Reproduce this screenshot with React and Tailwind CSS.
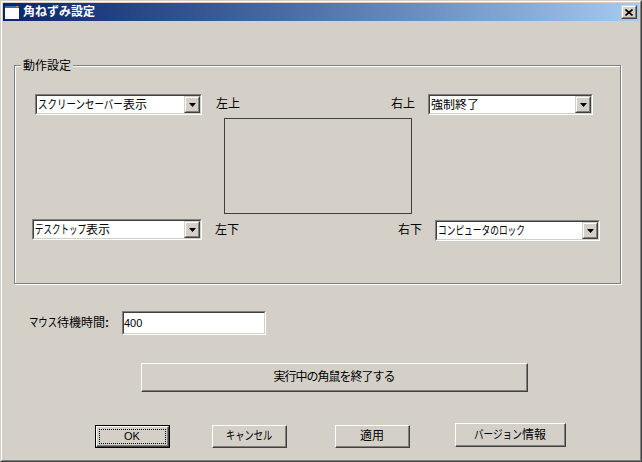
import React from 'react';

const FONT = "font-['Liberation_Sans','Noto_Sans_CJK_JP',sans-serif]";

// the original bitmap font has narrow kana, so squeeze them to the measured width
const Kana = ({ width, scale, children }) => (
  <span className={`inline-block whitespace-nowrap align-top ${width}`}>
    <span className={`inline-block origin-left ${scale}`}>{children}</span>
  </span>
);

// raised win2k style button edge
const Raised = ({ className = '', children }) => (
  <div className={`border border-t-white border-l-white border-r-[#404040] border-b-[#404040] bg-[#d4d0c8] ${className}`}>
    <div className="w-full h-full border-r border-b border-[#808080] flex items-center justify-center">
      {children}
    </div>
  </div>
);

// small button used in combos and the caption bar
const Small = ({ className = '', children }) => (
  <div className={`border border-t-[#d4d0c8] border-l-[#d4d0c8] border-r-[#404040] border-b-[#404040] bg-[#d4d0c8] ${className}`}>
    <div className="w-full h-full border border-t-white border-l-white border-r-[#808080] border-b-[#808080] flex items-center justify-center">
      {children}
    </div>
  </div>
);

const Sunken = ({ className = '', children }) => (
  <div className={`border border-t-[#808080] border-l-[#808080] border-r-white border-b-white ${className}`}>
    <div className="w-full h-full border border-t-[#404040] border-l-[#404040] border-r-[#d4d0c8] border-b-[#d4d0c8] bg-white flex items-center">
      {children}
    </div>
  </div>
);

const Combo = ({ children, className = '' }) => (
  <Sunken className={`h-[21px] shrink-0 ${className}`}>
    <span className="flex-1 pl-[1px] text-[12px] leading-none whitespace-nowrap overflow-hidden">{children}</span>
    <Small className="w-4 h-[17px] shrink-0">
      <svg width="7" height="4" viewBox="0 0 7 4"><path d="M0 0h7L3.5 4z" fill="#000" /></svg>
    </Small>
  </Sunken>
);

const App = () => {
  return (
    <div className={`w-[642px] h-[462px] bg-[#d4d0c8] text-black text-[12px] overflow-hidden ${FONT}`}>
      <div className="w-full h-full border border-t-[#d4d0c8] border-l-[#d4d0c8] border-r-[#404040] border-b-[#404040]">
        <div className="w-full h-full border border-t-white border-l-white border-r-[#808080] border-b-[#808080] p-[1px] flex flex-col">
          {/* Title bar */}
          <div className="h-[18px] shrink-0 flex items-center bg-gradient-to-r from-[#0a246a] to-[#a6caf0] px-[2px]">
            <svg width="14" height="13" viewBox="0 0 14 13" className="shrink-0">
              <rect x="0" y="0" width="14" height="13" fill="#fff" />
              <rect x="0" y="0" width="14" height="2" fill="#3a6ea5" />
              <rect x="11" y="0" width="2" height="1" fill="#d98a3a" />
            </svg>
            <span className="ml-1 font-bold text-white text-[12px] leading-none">角ねずみ設定</span>
            <Small className="ml-auto w-4 h-[14px]">
              <svg width="8" height="7" viewBox="0 0 8 7"><path d="M0.5 0.5L7.5 6.5M7.5 0.5L0.5 6.5" stroke="#000" strokeWidth="1.6" /></svg>
            </Small>
          </div>

          {/* 動作設定 group */}
          <div className="relative mt-[44px] ml-[11px] w-[607px] h-[219px] shrink-0 border border-[#808080] shadow-[inset_1px_1px_0_#fff,1px_1px_0_#fff] pt-[28px] flex flex-col">
            <span className="absolute left-[6px] -top-[7px] bg-[#d4d0c8] px-[2px] text-[12px] leading-[15px]">動作設定</span>

            <div className="flex items-center h-[21px] shrink-0">
              <Combo className="ml-[20px] w-[167px]">
                <Kana width="w-[85px]" scale="scale-x-[0.79]">スクリーンセーバー</Kana>表示
              </Combo>
              <span className="ml-[14px] pb-[1px]">左上</span>
              <span className="ml-auto pb-[1px]">右上</span>
              <Combo className="ml-[13px] mr-[27px] w-[165px]">強制終了</Combo>
            </div>

            <div className="ml-[209px] mt-[3px] w-[188px] h-[96px] border border-[#404040] shrink-0" />

            <div className="flex items-start h-[22px] mt-[5px] shrink-0">
              <Combo className="ml-[17px] w-[170px]">
                <Kana width="w-[51px]" scale="scale-x-[0.71]">デスクトップ</Kana>表示
              </Combo>
              <span className="ml-[13px] leading-[22px]">左下</span>
              <span className="ml-auto leading-[22px]">右下</span>
              <Combo className="ml-[13px] mr-[20px] w-[165px] mt-[1px]">
                <Kana width="w-[87px]" scale="scale-x-[0.725]">コンピュータのロック</Kana>
              </Combo>
            </div>
          </div>

          {/* mouse wait */}
          <div className="flex items-center mt-[27px] ml-[26px] h-[24px] shrink-0">
            <span className="w-[93px] whitespace-nowrap">
              <Kana width="w-[28px]" scale="scale-x-[0.78]">マウス</Kana>待機時間<span className="font-bold">:</span>
            </span>
            <Sunken className="w-[144px] h-[24px]">
              <span className="text-[11px] leading-none">400</span>
            </Sunken>
          </div>

          <Raised className="mt-[28px] ml-[138px] w-[387px] h-[29px] shrink-0">
            <span className="tracking-[-1px]">実行中の角鼠を終了する</span>
          </Raised>

          {/* bottom buttons */}
          <div className="flex items-end mt-[31px] h-[25px] shrink-0">
            <div className="ml-[92px] w-[75px] h-[23px] border border-black">
              <Raised className="w-full h-full relative">
                <span className="text-[11px]">OK</span>
                <div className="absolute inset-[2px] border border-dotted border-black" />
              </Raised>
            </div>
            <Raised className="ml-[42px] w-[75px] h-[23px]">
              <Kana width="w-[46px]" scale="scale-x-[0.77]">キャンセル</Kana>
            </Raised>
            <Raised className="ml-[48px] w-[75px] h-[23px]"><span>適用</span></Raised>
            <Raised className="ml-[45px] w-[111px] h-[24px] mb-[1px]">
              <span className="whitespace-nowrap">
                <Kana width="w-[48px]" scale="scale-x-[0.8]">バージョン</Kana>情報
              </span>
            </Raised>
          </div>
        </div>
      </div>
    </div>
  );
};

export default App;
